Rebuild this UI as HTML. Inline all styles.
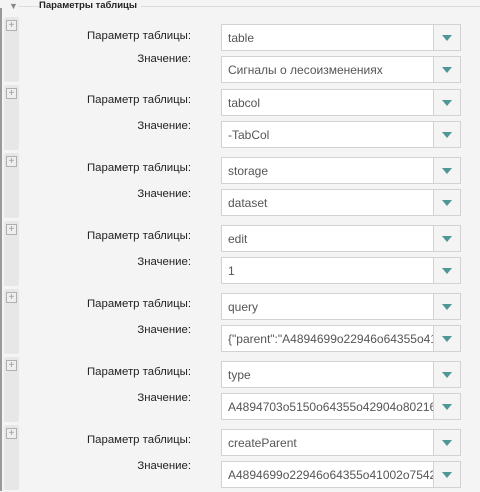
<!DOCTYPE html>
<html><head><style>
body{margin:0;width:480px;height:491px;background:#f4f4f4;font-family:"Liberation Sans",sans-serif;position:relative;overflow:hidden}
.vl{position:absolute;left:0;top:8px;width:2px;height:483px;background:#999}
.hd{position:absolute;left:9px;top:1px;font-size:9px;color:#888}
.ht{position:absolute;left:39px;top:0;font-size:9.5px;font-weight:bold;color:#222;background:#f4f4f4;padding-right:4px}
.hl{position:absolute;left:18px;right:0;top:6px;height:1px;background:#ddd}
.g{position:absolute;left:0;width:480px;height:68px}
.strip{position:absolute;left:4px;top:1px;width:15px;height:65px;background:#e7e7e7;border-radius:2px}
.plus{position:absolute;left:6px;top:4px;width:9px;height:9px;border:1px solid #b0b0b0;background:#eee;color:#999;font-size:10px;line-height:9px;text-align:center}
.lab{position:absolute;right:289px;font-size:11.4px;color:#222;white-space:nowrap}
.in{position:absolute;left:221px;width:238px;height:25px;border:1px solid #d2d2d2;background:#fff}
.in span{position:absolute;left:6px;top:6px;font-size:12px;color:#555;white-space:nowrap;overflow:hidden;width:207px}
.bt{position:absolute;right:0;top:0;width:26px;height:25px;border-left:1px solid #d2d2d2;background:#f4f4f4}
.bt:after{content:"";position:absolute;left:8px;top:10px;border-left:5px solid transparent;border-right:5px solid transparent;border-top:6px solid #4f9797}
</style></head><body>
<div class="vl"></div>
<div class="hl"></div>
<div class="hd">▼</div>
<div class="ht">Параметры таблицы</div>

<div class="g" style="top:16px"><div class="strip"></div><div class="plus">+</div>
<div class="lab" style="top:14px">Параметр таблицы:</div><div class="in" style="top:8px"><span>table</span><div class="bt"></div></div>
<div class="lab" style="top:37px">Значение:</div><div class="in" style="top:40px"><span>Сигналы о лесоизменениях</span><div class="bt"></div></div></div>

<div class="g" style="top:84px"><div class="strip"></div><div class="plus">+</div>
<div class="lab" style="top:10px">Параметр таблицы:</div><div class="in" style="top:5px"><span>tabcol</span><div class="bt"></div></div>
<div class="lab" style="top:36px">Значение:</div><div class="in" style="top:37px"><span>-TabCol</span><div class="bt"></div></div></div>

<div class="g" style="top:152px"><div class="strip"></div><div class="plus">+</div>
<div class="lab" style="top:10px">Параметр таблицы:</div><div class="in" style="top:5px"><span>storage</span><div class="bt"></div></div>
<div class="lab" style="top:36px">Значение:</div><div class="in" style="top:37px"><span>dataset</span><div class="bt"></div></div></div>

<div class="g" style="top:220px"><div class="strip"></div><div class="plus">+</div>
<div class="lab" style="top:10px">Параметр таблицы:</div><div class="in" style="top:5px"><span>edit</span><div class="bt"></div></div>
<div class="lab" style="top:36px">Значение:</div><div class="in" style="top:37px"><span>1</span><div class="bt"></div></div></div>

<div class="g" style="top:288px"><div class="strip"></div><div class="plus">+</div>
<div class="lab" style="top:10px">Параметр таблицы:</div><div class="in" style="top:5px"><span>query</span><div class="bt"></div></div>
<div class="lab" style="top:36px">Значение:</div><div class="in" style="top:37px"><span>{"parent":"A4894699o22946o64355o41002o75428"}</span><div class="bt"></div></div></div>

<div class="g" style="top:356px"><div class="strip"></div><div class="plus">+</div>
<div class="lab" style="top:10px">Параметр таблицы:</div><div class="in" style="top:5px"><span>type</span><div class="bt"></div></div>
<div class="lab" style="top:36px">Значение:</div><div class="in" style="top:37px"><span>A4894703o5150o64355o42904o802167</span><div class="bt"></div></div></div>

<div class="g" style="top:424px"><div class="strip"></div><div class="plus">+</div>
<div class="lab" style="top:10px">Параметр таблицы:</div><div class="in" style="top:5px"><span>createParent</span><div class="bt"></div></div>
<div class="lab" style="top:36px">Значение:</div><div class="in" style="top:37px"><span>A4894699o22946o64355o41002o75428</span><div class="bt"></div></div></div>
</body></html>
